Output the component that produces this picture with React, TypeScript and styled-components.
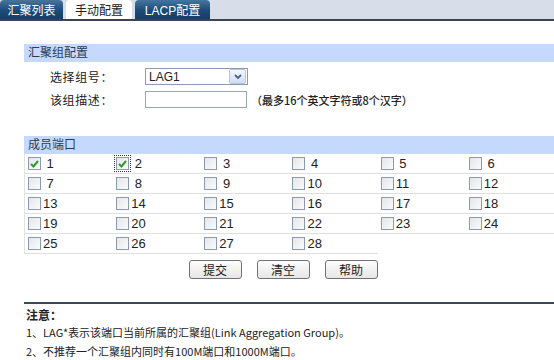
import styled, { createGlobalStyle } from "styled-components";

const GlobalStyle = createGlobalStyle`
    body {
        margin: 0;
        background: #ffffff;
        font-family: "Liberation Sans", "Noto Sans CJK SC", sans-serif;
        font-size: 12px;
        color: #222;
    }
`;

const TabBar = styled.div`
    height: 19px;
    background: #d7dde9;
    border-bottom: 2px solid #3a4351;
    display: flex;
    align-items: flex-end;
`;

const Tab = styled.div<{ $active?: boolean; $w: number }>`
    width: ${(p) => p.$w}px;
    height: 19px;
    margin-right: 3px;
    border-radius: 4px 4px 0 0;
    display: flex;
    align-items: center;
    justify-content: center;
    font-size: 12px;
    color: ${(p) => (p.$active ? "#222" : "#ffffff")};
    background: ${(p) =>
        p.$active
            ? "#ffffff"
            : "linear-gradient(#46769f, #1d4b78 55%, #163e66)"};
`;

const Page = styled.main`
    padding: 23px 0 0 24px;
`;

const SectionHeader = styled.div`
    height: 18px;
    line-height: 18px;
    padding-left: 4px;
    background: #c4d9fb;
    color: #2b3b55;
    font-size: 12px;
`;

const Form = styled.div`
    padding: 6px 0 28px 0;
    display: grid;
    gap: 6px;
`;

const FormRow = styled.div`
    display: flex;
    align-items: center;
    height: 17px;
`;

const Label = styled.span`
    width: 121px;
    padding-left: 26px;
    box-sizing: border-box;
    letter-spacing: 0.6px;
`;

const Select = styled.div`
    width: 98px;
    height: 15px;
    border: 1px solid #8a9bb0;
    display: flex;
    align-items: center;
    justify-content: space-between;
    padding-left: 3px;
    box-sizing: content-box;
`;

const Arrow = styled.span`
    width: 15px;
    height: 13px;
    margin-right: 1px;
    border: 1px solid #b6c6e0;
    border-radius: 2px;
    background: linear-gradient(#f3f7fe, #cfdcf3);
    display: flex;
    align-items: center;
    justify-content: center;
`;

const TextInput = styled.div`
    width: 100px;
    height: 15px;
    border: 1px solid #9ba6b4;
`;

const Hint = styled.span`
    padding-left: 4px;
    font-family: "Noto Sans CJK SC", sans-serif;
    font-size: 11px;
    font-weight: 500;
`;

const Ports = styled.div`
    display: grid;
    grid-template-columns: repeat(6, 1fr);
    border-left: 1px solid #e2e2e2;
`;

const Cell = styled.label`
    height: 19px;
    border-bottom: 1px solid #dedede;
    display: flex;
    align-items: center;
    padding-left: 3px;
    font-size: 13px;
    color: #222;
`;

const Box = styled.span<{ $focus?: boolean }>`
    width: 11px;
    height: 11px;
    border: 1px solid #8d9aab;
    background: linear-gradient(135deg, #e4e6ea, #fbfbfb);
    display: flex;
    align-items: center;
    justify-content: center;
    margin-right: 2px;
    outline: ${(p) => (p.$focus ? "1px dotted #333" : "none")};
    outline-offset: 1px;
`;

const Buttons = styled.div`
    display: flex;
    justify-content: center;
    gap: 15px;
    padding: 6px 12px 0 0;
`;

const Button = styled.button`
    width: 53px;
    height: 19px;
    border: 1px solid #6e7276;
    border-radius: 3px;
    background: linear-gradient(#fdfdfd, #e6e6e6);
    font-family: "Noto Sans CJK SC", sans-serif;
    font-size: 12px;
    padding: 0;
    color: #222;
`;

const Notes = styled.div`
    margin-top: 23px;
    border-top: 2px solid #3a4a5c;
    padding: 2px 0 0 2px;
    font-family: "Noto Sans CJK SC", "Liberation Sans", sans-serif;
    font-size: 11px;
    line-height: 19px;
`;

const NoteTitle = styled.div`
    font-weight: bold;
    font-size: 12px;
    line-height: 17px;
`;

const Check = () => (
    <svg width="9" height="8" viewBox="0 0 9 8">
        <path d="M1 4 L3.5 6.5 L8 1" fill="none" stroke="#2e9a2e" strokeWidth="2" />
    </svg>
);

const checked = [1, 2];

function App() {
    const ports = Array.from({ length: 28 }, (_, i) => i + 1);

    return (
        <>
            <GlobalStyle />
            <TabBar>
                <Tab $w={63}>汇聚列表</Tab>
                <Tab $w={66} $active>
                    手动配置
                </Tab>
                <Tab $w={75}>LACP配置</Tab>
            </TabBar>
            <Page>
                <SectionHeader>汇聚组配置</SectionHeader>
                <Form>
                    <FormRow>
                        <Label>选择组号：</Label>
                        <Select>
                            LAG1
                            <Arrow>
                                <svg width="8" height="6" viewBox="0 0 8 6">
                                    <path d="M1 1 L4 4 L7 1" fill="none" stroke="#4d6185" strokeWidth="1.8" />
                                </svg>
                            </Arrow>
                        </Select>
                    </FormRow>
                    <FormRow>
                        <Label>该组描述：</Label>
                        <TextInput />
                        <Hint>（最多16个英文字符或8个汉字）</Hint>
                    </FormRow>
                </Form>
                <SectionHeader>成员端口</SectionHeader>
                <Ports>
                    {ports.map((n) => (
                        <Cell key={n}>
                            <Box $focus={n === 2}>{checked.includes(n) && <Check />}</Box>
                            {n < 10 ? `\u00a0${n}` : n}
                        </Cell>
                    ))}
                </Ports>
                <Buttons>
                    <Button>提交</Button>
                    <Button>清空</Button>
                    <Button>帮助</Button>
                </Buttons>
                <Notes>
                    <NoteTitle>注意：</NoteTitle>
                    <div>1、LAG*表示该端口当前所属的汇聚组(Link Aggregation Group)。</div>
                    <div>2、不推荐一个汇聚组内同时有100M端口和1000M端口。</div>
                </Notes>
            </Page>
        </>
    );
}

export default App;
